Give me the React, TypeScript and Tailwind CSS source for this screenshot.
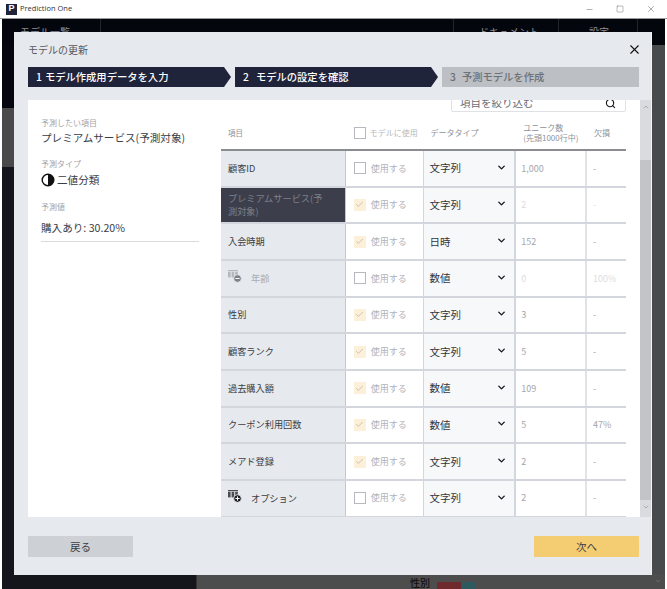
import { X, Minus, Square, Search, ChevronDown, Check, ChevronUp } from "lucide-react";

type Row = {
  name: string;
  use: "on" | "off";
  type: string;
  unique: string;
  missing: string;
  dim?: boolean;
  target?: boolean;
  icon?: "minus" | "plus";
};

const rows: Row[] = [
  { name: "顧客ID", use: "off", type: "文字列", unique: "1,000", missing: "-" },
  { name: "プレミアムサービス(予測対象)", use: "on", type: "文字列", unique: "2", missing: "-", target: true, dim: true },
  { name: "入会時期", use: "on", type: "日時", unique: "152", missing: "-" },
  { name: "年齢", use: "off", type: "数値", unique: "0", missing: "100%", dim: true, icon: "minus" },
  { name: "性別", use: "on", type: "文字列", unique: "3", missing: "-" },
  { name: "顧客ランク", use: "on", type: "文字列", unique: "5", missing: "-" },
  { name: "過去購入額", use: "on", type: "数値", unique: "109", missing: "-" },
  { name: "クーポン利用回数", use: "on", type: "数値", unique: "5", missing: "47%" },
  { name: "メアド登録", use: "on", type: "文字列", unique: "2", missing: "-" },
  { name: "オプション", use: "off", type: "文字列", unique: "2", missing: "-", icon: "plus" },
];

function ColumnIcon({ kind, dim }: { kind: "minus" | "plus"; dim?: boolean }) {
  const color = dim ? "#b4b7bd" : "#4a4c52";
  const badge = dim ? "#7d8087" : "#1c1e24";
  return (
    <svg width="14" height="13" viewBox="0 0 14 13" className="mb-[3px] shrink-0">
      <rect x="0" y="0" width="10" height="1.2" fill={color} />
      <rect x="0" y="1.8" width="2.6" height="5.6" fill={color} />
      <rect x="3.6" y="1.8" width="2.6" height="5.6" fill={color} />
      <rect x="7.2" y="1.8" width="2.6" height="5.6" fill={color} />
      <circle cx="9.5" cy="8.5" r="3.8" fill={badge} stroke="#e6e9ed" strokeWidth="0.8" />
      <rect x="7.4" y="8" width="4.2" height="1" fill="#fff" />
      {kind === "plus" ? <rect x="9" y="6.4" width="1" height="4.2" fill="#fff" /> : null}
    </svg>
  );
}

function Step({ n, label, active, first }: { n: string; label: string; active: boolean; first?: boolean }) {
  if (!active) {
    return (
      <div className="flex h-5 w-[197px] items-center bg-[#bcbfc4] pl-[8px] text-[10.3px] font-medium text-[#6d7077]">
        <span className="mr-[6px]">{n}</span>
        {label}
      </div>
    );
  }
  return (
    <div className="flex h-5 w-[203px] items-center bg-[#20243a] pl-[8px] text-[10.3px] font-medium text-white [clip-path:polygon(0_0,calc(100%-7px)_0,100%_50%,calc(100%-7px)_100%,0_100%)]">
      <span className={first ? "mr-[3px]" : "mr-[7px]"}>{n}</span>
      {label}
    </div>
  );
}

function TableRow({ row }: { row: Row }) {
  return (
    <div className="flex h-[36.67px] shrink-0 border-b-2 border-[#d3d6dc]">
      <div
        className={`flex w-[125px] items-center gap-[9px] border-r border-[#c3c6cc] pl-[7px] pr-[16px] text-[9.2px] leading-[13px] ${
          row.target
            ? "bg-[#3c3e4c] text-[#7e808a]"
            : row.dim
              ? "bg-[#e6e9ed] text-[#a9adb5]"
              : "bg-[#e6e9ed] text-[#3a3d44]"
        }`}
      >
        {row.icon ? <ColumnIcon kind={row.icon} dim={row.dim} /> : null}
        <span className="break-all">{row.name}</span>
      </div>
      <div className="flex w-[78px] items-center gap-[5px] border-r border-[#d3d6dc] pl-[8px] text-[9px] text-[#b0b3b9]">
        {row.use === "on" ? (
          <span className="flex h-3 w-3 items-center justify-center bg-[#fcf0d8]">
            <Check size={9} strokeWidth={2} color="#b9b5a9" />
          </span>
        ) : (
          <span className="h-3 w-3 border border-[#b6b8bd] bg-white" />
        )}
        使用する
      </div>
      <div className="flex w-[93px] items-center justify-between border-r-2 border-[#d3d6dc] bg-[#f7f8fa] pl-[6px] pr-[7px] text-[10.5px] text-[#33363c]">
        {row.type}
        <ChevronDown size={11} strokeWidth={3} color="#15171c" className="-mt-[2px]" />
      </div>
      <div
        className={`flex w-[71px] items-center border-r-2 border-[#e0e2e6] pl-[5px] text-[9px] ${
          row.dim ? "text-[#dcdde0]" : "text-[#a3a6ac]"
        }`}
      >
        {row.unique}
      </div>
      <div className={`flex w-[39px] items-center pl-[6px] text-[9px] ${row.dim ? "text-[#dcdde0]" : "text-[#a3a6ac]"}`}>
        {row.missing}
      </div>
    </div>
  );
}

export default function App() {
  return (
    <div className="relative flex h-[589px] w-[667px] flex-col overflow-hidden bg-white font-['Noto_Sans_CJK_JP','Noto_Sans',sans-serif]">
      {/* title bar */}
      <div className="flex h-[19px] shrink-0 items-center border-b border-[#9b9b9b] bg-white pl-[6px]">
        <span className="flex h-[11px] w-[11px] items-center justify-center bg-[#20243a] font-['Liberation_Sans',sans-serif] text-[9px] font-bold text-white">
          P
        </span>
        <span className="ml-[3px] font-['Open_Sans',sans-serif] text-[7.5px] text-[#333]">Prediction One</span>
        <div className="ml-auto flex items-center gap-[22px] pr-[11px] text-[#333]">
          <Minus size={9} strokeWidth={1} />
          <Square size={8} strokeWidth={1} />
          <X size={10} strokeWidth={1} />
        </div>
      </div>

      {/* app behind the dialog */}
      <div className="ml-[2px] mr-[2px] flex min-h-0 flex-1 flex-col bg-[#14161c]">
        <div className="flex h-[26px] shrink-0 items-center bg-[#04060e] text-[10px] text-[#8d8f96]">
          <span className="w-[99px] border-r border-[#23252c] pl-[18px] leading-[26px]">モデル一覧</span>
          <span className="ml-auto w-[106px] border-x border-[#23252c] pl-[25px] leading-[26px]">ドキュメント</span>
          <span className="w-[79px] border-r border-[#23252c] pl-[30px] leading-[26px]">設定</span>
          <span className="w-[27px]" />
        </div>
        <div className="flex min-h-0 flex-1">
          <div className="flex w-[194px] flex-col">
            <div className="h-[63px] bg-[#05070f]" />
            <div className="h-[59px] bg-[#4a4a4a]" />
          </div>
          <div className="flex-1 bg-[#484a4c]" />
        </div>
      </div>
      <div className="absolute bottom-0 left-[196px] flex h-[15px] w-[469px] items-start border-l border-[#333] bg-[#4d4d4d] pl-[213px]">
        <span className="mt-[2px] text-[10px] font-medium leading-[14px] text-[#111]">性別</span>
        <span className="ml-[7px] mt-[8px] flex h-[8px] w-[38px]">
          <span className="w-[24px] bg-[#6e2a2c]" />
          <span className="w-[14px] bg-[#2c5a5e]" />
        </span>
        <ChevronDown size={8} color="#777" className="ml-auto mr-[3px] mt-[3px]" />
      </div>

      {/* dialog */}
      <div className="absolute left-[14px] top-[32px] flex h-[543px] w-[638px] flex-col border-r border-[#f4f5f7] bg-[#e6e9ed]">
        <div className="flex h-[35px] shrink-0 items-center justify-between pb-[1px] pl-[14px] pr-[9px]">
          <span className="text-[10px] text-[#55585f]">モデルの更新</span>
          <X size={15} strokeWidth={1.8} color="#111" />
        </div>
        <div className="flex shrink-0 items-center gap-[4px] pl-[14px]">
          <Step n="1" label="モデル作成用データを入力" active first />
          <Step n="2" label="モデルの設定を確認" active />
          <Step n="3" label="予測モデルを作成" active={false} />
        </div>

        <div className="mt-[13px] flex h-[417px] shrink-0 overflow-hidden pl-[14px]">
          <div className="flex w-[193px] shrink-0 flex-col bg-white pl-[13px] pr-[22px] pt-[18px]">
            <span className="text-[8px] leading-[10px] text-[#a0a3a9]">予測したい項目</span>
            <span className="mt-[2px] text-[10.6px] leading-[15px] text-[#3a3d44]">プレミアムサービス(予測対象)</span>
            <span className="mt-[14px] text-[8px] leading-[10px] text-[#a0a3a9]">予測タイプ</span>
            <div className="mt-[3px] flex items-center gap-[2px] text-[10.6px] leading-[16px] text-[#3a3d44]">
              <svg width="14" height="14" viewBox="0 0 14 14">
                <circle cx="7" cy="7" r="5.8" fill="#fff" stroke="#111" strokeWidth="1.4" />
                <path d="M7 1.2 A5.8 5.8 0 0 1 7 12.8 Z" fill="#111" />
              </svg>
              二値分類
            </div>
            <span className="mt-[14px] text-[8px] leading-[10px] text-[#a0a3a9]">予測値</span>
            <span className="mt-[6px] border-b border-[#d8dade] pb-[3px] text-[10.6px] leading-[20px] text-[#3a3d44]">
              購入あり: 30.20%
            </span>
          </div>

          <div className="flex min-w-0 flex-1 bg-white">
            <div className="flex w-[405px] shrink-0 flex-col">
              <div className="-mt-[6px] ml-[230px] flex h-[18px] w-[175px] shrink-0 items-center justify-between rounded-b-[2px] border border-[#dfe1e5] bg-white pl-[8px] pr-[9px] text-[10.5px] text-[#6a6d74]">
                項目を絞り込む
                <Search size={11} strokeWidth={2.4} color="#15171c" />
              </div>
              <div className="flex h-[39px] shrink-0 items-center border-b-2 border-[#8a8c90] pt-[4px] text-[8px] text-[#8e9197]">
                <span className="w-[125px] pl-[7px] text-[7.5px]">項目</span>
                <span className="flex w-[78px] items-center gap-[4px] pl-[8px] text-[#b6b9be]">
                  <span className="h-3 w-3 border border-[#b6b8bd]" />
                  モデルに使用
                </span>
                <span className="w-[93px] pl-[7px]">データタイプ</span>
                <span className="w-[71px] pl-[7px] leading-[10px]">
                  ユニーク数
                  <br />
                  (先頭1000行中)
                </span>
                <span className="w-[39px] pl-[7px]">欠損</span>
              </div>
              {rows.map((row) => (
                <TableRow key={row.name} row={row} />
              ))}
            </div>
            <div className="ml-[14px] flex w-[11px] shrink-0 flex-col items-center bg-[#d9dbdf]">
              <ChevronUp size={8} color="#8e9197" className="mt-[3px]" />
              <div className="mt-[49px] h-[340px] w-full bg-[#c2c4c8]" />
              <ChevronDown size={8} color="#8e9197" className="mt-[3px]" />
            </div>
          </div>
        </div>

        <div className="mt-[19px] flex shrink-0 justify-between pl-[14px] pr-[12px]">
          <button className="h-[21px] w-[105px] rounded-[1px] bg-[#cdd0d5] text-[10.5px] text-[#3a3d44]">戻る</button>
          <button className="h-[21px] w-[105px] rounded-[1px] bg-[#f4cd73] text-[10.5px] text-[#3a3d44]">次へ</button>
        </div>
      </div>
    </div>
  );
}
